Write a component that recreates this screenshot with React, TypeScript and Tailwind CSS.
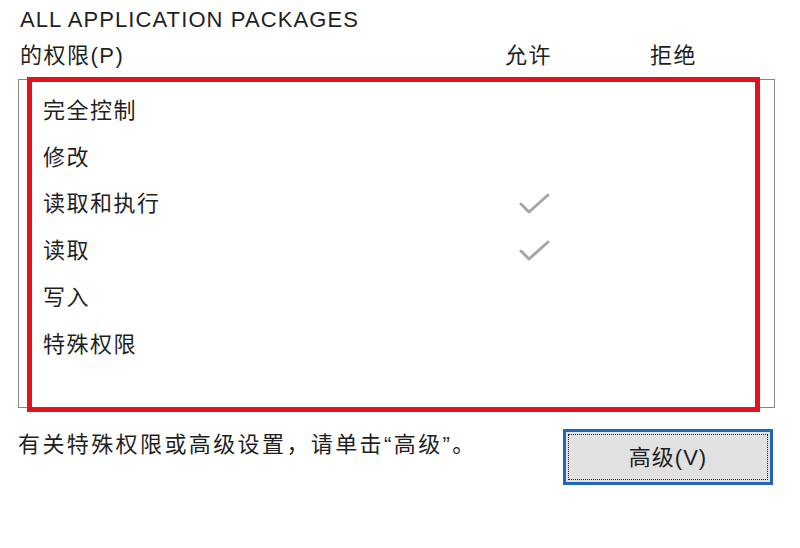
import React from "react";

const FONT = '"Liberation Sans", "Noto Sans CJK SC", sans-serif';

function Check() {
  return (
    <svg width="32" height="24" viewBox="0 0 32 24" className="block">
      <polyline
        points="2,12 10,20 29,3"
        fill="none"
        stroke="#a6a6a6"
        strokeWidth="3"
        strokeLinecap="round"
        strokeLinejoin="round"
      />
    </svg>
  );
}

const rows: { label: string; allow: boolean }[] = [
  { label: "完全控制", allow: false },
  { label: "修改", allow: false },
  { label: "读取和执行", allow: true },
  { label: "读取", allow: true },
  { label: "写入", allow: false },
  { label: "特殊权限", allow: false },
];

export default function App() {
  return (
    <div
      className="relative w-[800px] h-[548px] overflow-hidden bg-white text-[#1f1f1f] text-[22px]"
      style={{ fontFamily: FONT }}
    >
      <div className="pl-[20px] pt-[5px] leading-[30px] tracking-[1.1px]">
        ALL APPLICATION PACKAGES
      </div>
      <div className="flex items-center h-[40px] pl-[20px] tracking-[1.5px]">
        <span className="w-[485px]">的权限(P)</span>
        <span className="w-[145px]">允许</span>
        <span>拒绝</span>
      </div>
      <div className="ml-[18px] mt-[4px] w-[757px] h-[329px] border border-[#828790] pt-[7px]">
        {rows.map((r) => (
          <div key={r.label} className="flex items-center h-[46.8px]">
            <span className="w-[500px] pl-[24px] tracking-[1.5px]">{r.label}</span>
            {r.allow && <Check />}
          </div>
        ))}
      </div>
      <div className="flex justify-between items-start mt-[21px] pl-[18px] pr-[27px]">
        <span className="leading-[32px] tracking-[2.4px]">
          有关特殊权限或高级设置，请单击“高级”。
        </span>
        <button className="w-[210px] h-[56px] border-[3px] border-[#2267b5] bg-[#e1e1e1] p-[2px]">
          <div className="w-full h-full border border-dotted border-[#222] flex items-center justify-center tracking-[1px]">
            高级(V)
          </div>
        </button>
      </div>
      <div className="absolute left-[27px] top-[77px] w-[733px] h-[335px] border-[5px] border-[#e3121c] pointer-events-none" />
    </div>
  );
}
